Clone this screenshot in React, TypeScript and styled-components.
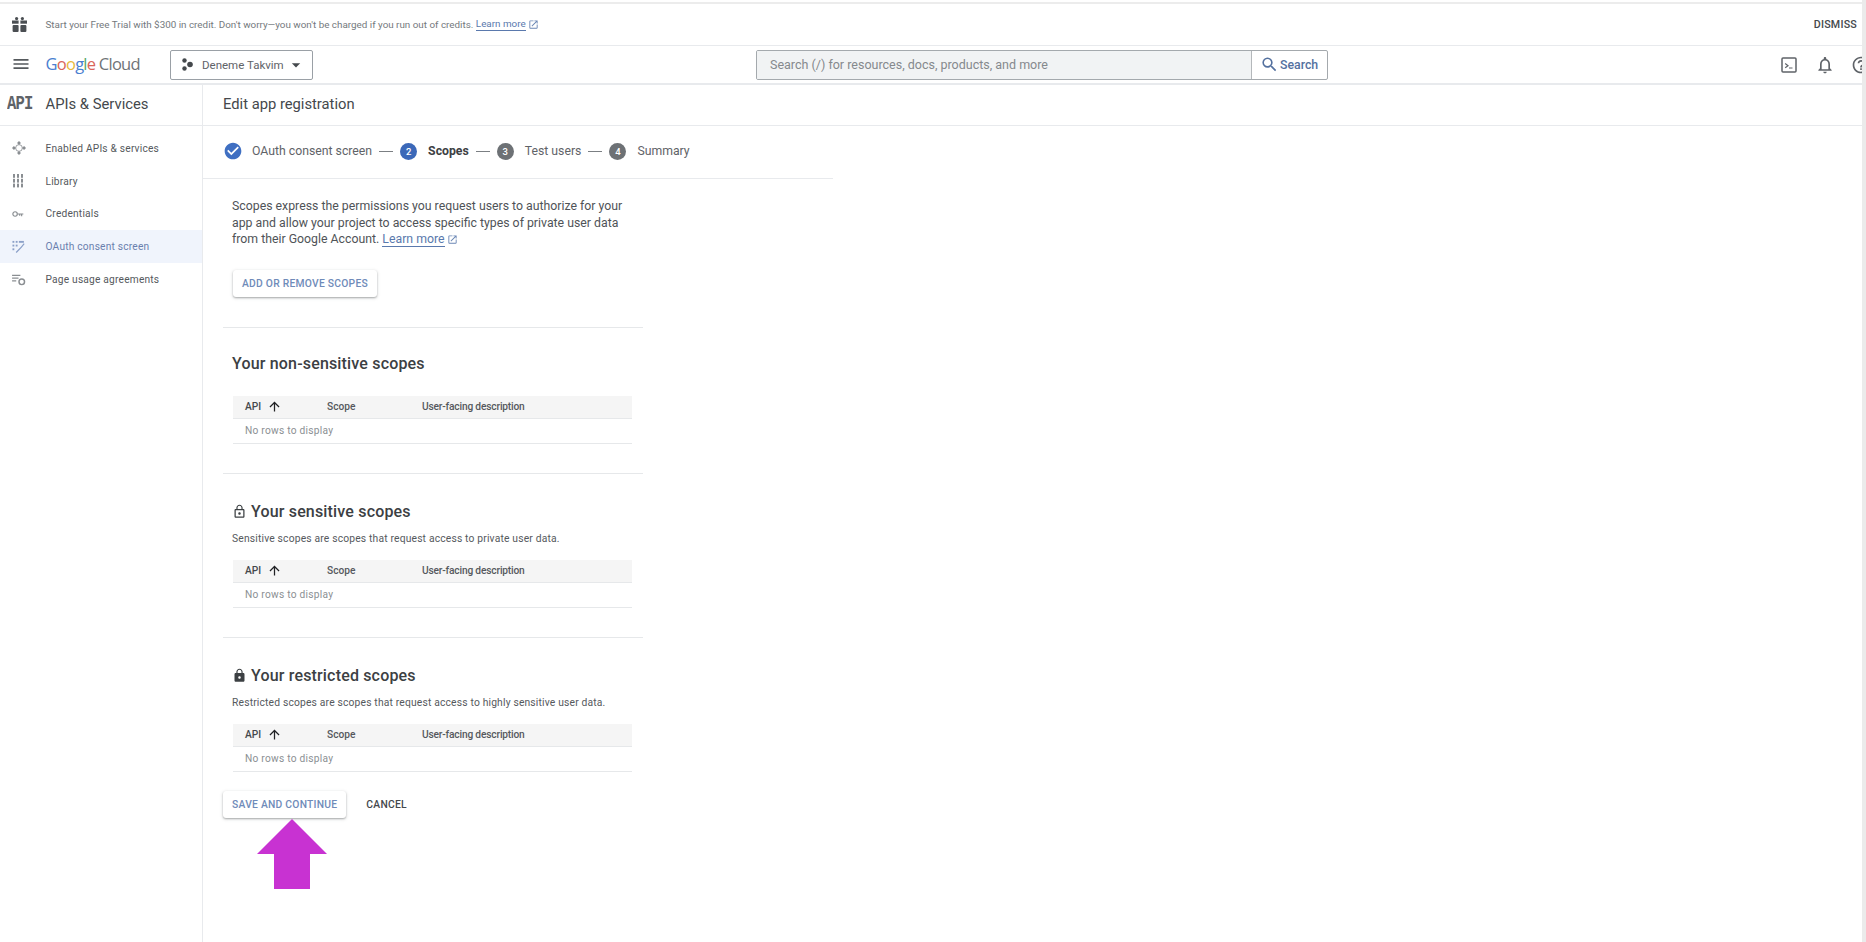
import React from "react";
import styled, { createGlobalStyle } from "styled-components";
import {
  MdMenu,
  MdArrowDropDown,
  MdSearch,
  MdNotificationsNone,
  MdHelpOutline,
  MdLockOutline,
  MdLock,
  MdArrowUpward,
  MdCheckCircle,
  MdOpenInNew,
} from "react-icons/md";

const Global = createGlobalStyle`
  html, body { margin: 0; padding: 0; background: #fff; }
  body { font-family: Roboto, "Liberation Sans", sans-serif; color: #3c4043; }
  * { box-sizing: border-box; }
`;

const Page = styled.div`
  position: relative;
  width: 1866px;
  height: 942px;
  overflow: hidden;
  display: flex;
  background: #fff;
`;
const Viewport = styled.div`
  width: 1862px;
  display: flex;
  flex-direction: column;
  overflow: hidden;
`;
const ScrollStrip = styled.div`
  width: 4px;
  background: #ebebeb;
`;
const TopRule = styled.div`
  height: 4px;
  flex: none;
  padding-top: 2px;
  &::after {
    content: "";
    display: block;
    height: 2px;
    background: #ececec;
  }
`;
const Banner = styled.div`
  height: 42px;
  flex: none;
  display: flex;
  align-items: center;
  border-bottom: 1px solid #e8eaed;
  padding: 0 5px 0 12px;
`;
const GiftSlot = styled.span`
  width: 33.5px;
  display: flex;
  color: #4a4e52;
`;
const BannerText = styled.span`
  font-size: 9.85px;
  color: #74797d;
  flex: 1;
  display: flex;
  align-items: center;
  white-space: pre;
`;
const BannerLink = styled.span`
  color: #5a79ad;
  border-bottom: 1px solid #5a79ad;
  line-height: 12px;
`;
const ExtIcon = styled(MdOpenInNew)`
  color: #6b87b5;
  margin-left: 2px;
  vertical-align: -1.5px;
`;
const Dismiss = styled.span`
  font-size: 10.7px;
  font-weight: 500;
  color: #44484c;
  letter-spacing: 0.2px;
`;
const Header = styled.div`
  height: 39px;
  flex: none;
  display: flex;
  align-items: center;
  border-bottom: 2px solid #e8eaed;
  padding-left: 11px;
`;
const MenuSlot = styled.span`
  width: 34.5px;
  display: flex;
  padding-bottom: 1px;
  color: #55595d;
`;
const Logo = styled.span`
  width: 124.5px;
  padding-bottom: 2px;
  font-family: "Open Sans", sans-serif;
  font-size: 16.5px;
  letter-spacing: -0.75px;
  color: #6f7377;
  white-space: pre;
`;
const Letter = styled.span<{ $c: string }>`
  color: ${(p) => p.$c};
`;
const Project = styled.div`
  width: 143px;
  height: 30px;
  border: 1px solid #9aa0a6;
  border-radius: 2px;
  display: flex;
  align-items: center;
  padding-left: 11px;
  font-size: 11.5px;
  color: #5f6368;
  gap: 9px;
`;
const Caret = styled(MdArrowDropDown)`
  margin-left: -7px;
  color: #45494d;
`;
const SearchBox = styled.div`
  margin-left: 443px;
  width: 572px;
  height: 30px;
  border: 1px solid #a4a9ad;
  border-radius: 2px;
  display: flex;
  overflow: hidden;
`;
const SearchField = styled.div`
  flex: 1;
  background: #f1f3f4;
  color: #85898d;
  font-size: 12.5px;
  display: flex;
  align-items: center;
  padding-left: 13px;
`;
const SearchButton = styled.div`
  width: 76px;
  border-left: 1px solid #b4b8bb;
  display: flex;
  align-items: center;
  padding-left: 8px;
  gap: 1px;
  font-size: 12.3px;
  font-weight: 500;
  color: #54719f;
`;
const HeaderIcons = styled.div`
  margin-left: auto;
  width: 81px;
  display: flex;
  align-items: center;
  color: #5f6368;
  gap: 18px;
  flex: none;
  overflow: hidden;
  height: 20px;
`;
const HelpIcon = styled(MdHelpOutline)`
  margin-left: -2px;
  flex: none;
`;
const BellIcon = styled(MdNotificationsNone)`
  flex: none;
`;
const Body = styled.div`
  flex: 1;
  display: flex;
  min-height: 0;
`;
const Sidebar = styled.aside`
  width: 203px;
  flex: none;
  border-right: 1px solid #e8eaed;
`;
const SideHead = styled.div`
  height: 41px;
  display: flex;
  align-items: center;
  border-bottom: 1px solid #e8eaed;
  padding: 0 0 2px 7px;
  font-size: 14.8px;
  color: #44484c;
`;
const ApiMark = styled.span`
  width: 38.5px;
  display: inline-block;
  font-family: "Liberation Mono", monospace;
  font-weight: 700;
  font-size: 15.5px;
  letter-spacing: -0.8px;
  color: #5f6368;
  transform: scaleY(1.25);
  transform-origin: left center;
`;
const NavList = styled.nav`
  padding-top: 6px;
`;
const NavRow = styled.div<{ $active?: boolean }>`
  height: 32.8px;
  display: flex;
  align-items: center;
  padding-left: 12px;
  font-size: 10.2px;
  letter-spacing: 0.2px;
  color: ${(p) => (p.$active ? "#6a7fae" : "#55595d")};
  background: ${(p) => (p.$active ? "#f0f4fc" : "transparent")};
`;
const NavIcon = styled.span<{ $active?: boolean }>`
  width: 33.5px;
  display: flex;
  color: ${(p) => (p.$active ? "#8ba0c8" : "#8a8e92")};
`;
const Main = styled.main`
  flex: 1;
  min-width: 0;
`;
const TitleBar = styled.div`
  height: 41px;
  display: flex;
  align-items: center;
  border-bottom: 1px solid #e8eaed;
  padding: 0 0 2px 20px;
  font-size: 14.75px;
  color: #44484c;
`;
const Stepper = styled.div`
  width: 630px;
  height: 53px;
  display: flex;
  align-items: center;
  border-bottom: 1px solid #e8eaed;
  padding: 0 0 2px 20px;
  font-size: 12.25px;
  color: #5f6368;
`;
const StepCheck = styled(MdCheckCircle)`
  color: #3f6fc2;
  margin-right: 9px;
`;
const StepBadge = styled.span<{ $active?: boolean }>`
  width: 17px;
  height: 17px;
  border-radius: 50%;
  background: ${(p) => (p.$active ? "#3b68b8" : "#6d7175")};
  color: #fff;
  font-size: 9.5px;
  font-weight: 500;
  display: flex;
  align-items: center;
  justify-content: center;
  margin-right: 11px;
`;
const StepLabel = styled.span<{ $active?: boolean }>`
  font-weight: ${(p) => (p.$active ? 700 : 400)};
  color: ${(p) => (p.$active ? "#3c4043" : "#5f6368")};
`;
const StepDash = styled.span`
  width: 14px;
  margin: 0 7px 0 7px;
  height: 1px;
  background: #7b7f83;
`;
const Form = styled.div`
  width: 420px;
  margin-left: 20px;
`;
const Intro = styled.section`
  padding: 19px 9px 29.5px;
  border-bottom: 1px solid #e6e8ea;
`;
const Paragraph = styled.p`
  margin: 0;
  font-size: 12.3px;
  line-height: 16.5px;
  color: #4f5357;
`;
const InlineLink = styled.span`
  color: #5a79ad;
  border-bottom: 1px solid #5a79ad;
`;
const RaisedButton = styled.button`
  all: unset;
  display: inline-flex;
  align-items: center;
  height: 27px;
  padding: 0 9px;
  border-radius: 3px;
  font-size: 10.3px;
  font-weight: 500;
  letter-spacing: 0.25px;
  color: #6f8bb9;
  white-space: nowrap;
  box-shadow: 0 1px 2px rgba(60, 64, 67, 0.4), 0 1px 4px rgba(60, 64, 67, 0.12);
`;
const AddButton = styled(RaisedButton)`
  margin: 22.5px 0 0 1px;
`;
const ScopeBlock = styled.section<{ $top: number; $divided?: boolean; $bottom: number }>`
  padding: ${(p) => p.$top}px 9px ${(p) => p.$bottom}px;
  border-bottom: ${(p) => (p.$divided ? "1px solid #e6e8ea" : "none")};
`;
const Heading = styled.h3`
  margin: 0;
  height: 24px;
  display: flex;
  align-items: center;
  gap: 4px;
  font-size: 16px;
  font-weight: 500;
  color: #3c4043;
  letter-spacing: 0.17px;
`;
const HeadingLock = styled.span`
  display: flex;
  color: #3c4043;
`;
const Note = styled.p`
  margin: 8px 0 0;
  height: 14px;
  line-height: 14px;
  font-size: 10.3px;
  letter-spacing: 0.17px;
  color: #55595d;
`;
const Table = styled.div<{ $top: number }>`
  width: 399px;
  margin: ${(p) => p.$top}px 0 0 1px;
  border-bottom: 1px solid #e6e8ea;
`;
const TableHead = styled.div`
  height: 23.5px;
  background: #f5f5f5;
  border-bottom: 1px solid #e6e8ea;
  display: grid;
  grid-template-columns: 82px 95px 1fr;
  align-items: center;
  padding-left: 12px;
  font-size: 10.2px;
  font-weight: 500;
  color: #55595d;
`;
const ApiColumn = styled.span`
  display: flex;
  align-items: center;
  gap: 6px;
  color: #44484c;
`;
const DescColumn = styled.span`
  letter-spacing: -0.17px;
`;
const SortArrow = styled(MdArrowUpward)`
  color: #202124;
`;
const TableEmpty = styled.div`
  height: 23.5px;
  display: flex;
  align-items: center;
  padding-left: 12px;
  font-size: 10.2px;
  letter-spacing: 0.25px;
  color: #8b8f93;
`;
const Actions = styled.div`
  display: flex;
  align-items: center;
  gap: 20px;
  margin-top: 19px;
`;
const CancelButton = styled.span`
  font-size: 10.3px;
  font-weight: 500;
  letter-spacing: 0.25px;
  color: #44484c;
`;
const Pointer = styled.svg`
  position: absolute;
  left: 257px;
  top: 819px;
  width: 70px;
  height: 70px;
`;
const TerminalSvg = styled.svg`
  flex: none;
`;

const GiftIcon = () => (
  <svg width="15" height="15" viewBox="0 0 15 15" fill="currentColor">
    <rect x="0" y="3.5" width="6.6" height="3.2" />
    <rect x="8.4" y="3.5" width="6.6" height="3.2" />
    <rect x="0.6" y="8" width="6" height="7" rx="1" />
    <rect x="8.4" y="8" width="6" height="7" rx="1" />
    <circle cx="4.6" cy="1.6" r="1.6" />
    <circle cx="10.4" cy="1.6" r="1.6" />
  </svg>
);
const HubIcon = () => (
  <svg width="11" height="13" viewBox="0 0 11 13" fill="#44484c">
    <circle cx="2.5" cy="2.5" r="2.2" />
    <circle cx="8" cy="6.5" r="2.8" />
    <circle cx="2.5" cy="10.5" r="2.2" />
  </svg>
);
const TerminalIcon = () => (
  <TerminalSvg width="16" height="16" viewBox="0 0 16 16" fill="none" stroke="currentColor">
    <rect x="1" y="1" width="14" height="14" rx="1" strokeWidth="1.5" />
    <path d="M4.2 6.5 7 8.7 4.2 10.8M8 11h3.5" strokeWidth="1.2" />
  </TerminalSvg>
);
const ApisIcon = () => (
  <svg width="14" height="14" viewBox="0 0 15 15" fill="currentColor">
    <path d="M7.5 0 9.6 2.1 7.5 4.2 5.4 2.1ZM2.1 5.4 4.2 7.5 2.1 9.6 0 7.5ZM12.9 5.4 15 7.5 12.9 9.6 10.8 7.5ZM7.5 10.8 9.6 12.9 7.5 15 5.4 12.9Z" />
    <circle cx="7.5" cy="7.5" r="3.6" fill="none" stroke="currentColor" strokeWidth="0.9" />
  </svg>
);
const LibraryIcon = () => (
  <svg width="13" height="14" viewBox="0 0 13 14" fill="currentColor">
    {[1, 5, 9].map((x) =>
      [0, 4.8, 9.6].map((y) => <rect key={`${x}-${y}`} x={x} y={y} width="2" height="3.8" />)
    )}
  </svg>
);
const KeyIcon = () => (
  <svg width="12" height="8" viewBox="0 0 13 9" fill="none" stroke="currentColor" strokeWidth="1.3">
    <circle cx="3.2" cy="4.5" r="2.5" />
    <path d="M5.8 4.5H12.5M10.6 4.5V7M8.4 4.5V6.4" />
  </svg>
);
const ConsentIcon = () => (
  <svg width="13" height="13" viewBox="0 0 14 14" fill="currentColor">
    <rect x="0.5" y="1" width="2" height="2" />
    <rect x="0.5" y="5" width="2" height="2" />
    <rect x="0.5" y="9" width="2" height="2" />
    <rect x="4" y="1" width="2" height="2" />
    <rect x="4" y="5" width="2" height="2" />
    <rect x="7.4" y="1" width="5.4" height="2" />
    <path d="M4 13 9.6 7.2 12.6 3.6l1 .8-3 3.8L5 14Z" />
  </svg>
);
const UsageIcon = () => (
  <svg width="14" height="12" viewBox="0 0 15 13" fill="none" stroke="currentColor">
    <path d="M0 1.5h9M0 4.5h7M0 7.5h4.5" strokeWidth="1.2" />
    <circle cx="10.5" cy="8.5" r="3" strokeWidth="1.6" />
  </svg>
);

const navItems = [
  { label: "Enabled APIs & services", icon: <ApisIcon /> },
  { label: "Library", icon: <LibraryIcon /> },
  { label: "Credentials", icon: <KeyIcon /> },
  { label: "OAuth consent screen", icon: <ConsentIcon />, active: true },
  { label: "Page usage agreements", icon: <UsageIcon /> },
];

const ScopesTable = ({ top }: { top: number }) => (
  <Table $top={top}>
    <TableHead>
      <ApiColumn>
        API <SortArrow size={15} />
      </ApiColumn>
      <span>Scope</span>
      <DescColumn>User-facing description</DescColumn>
    </TableHead>
    <TableEmpty>No rows to display</TableEmpty>
  </Table>
);

export default function App() {
  return (
    <Page>
      <Global />
      <Viewport>
        <TopRule />
        <Banner>
          <GiftSlot>
            <GiftIcon />
          </GiftSlot>
          <BannerText>
            Start your Free Trial with $300 in credit. Don't worry—you won't be charged if you run out of credits.{" "}
            <BannerLink>Learn more</BannerLink>
            <ExtIcon size={11} />
          </BannerText>
          <Dismiss>DISMISS</Dismiss>
        </Banner>
        <Header>
          <MenuSlot>
            <MdMenu size={20} />
          </MenuSlot>
          <Logo>
            <Letter $c="#4a7fd0">G</Letter>
            <Letter $c="#d9655a">o</Letter>
            <Letter $c="#e8b93c">o</Letter>
            <Letter $c="#4a7fd0">g</Letter>
            <Letter $c="#55a868">l</Letter>
            <Letter $c="#d9655a">e</Letter> Cloud
          </Logo>
          <Project>
            <HubIcon />
            Deneme Takvim
            <Caret size={20} />
          </Project>
          <SearchBox>
            <SearchField>Search (/) for resources, docs, products, and more</SearchField>
            <SearchButton>
              <MdSearch size={19} />
              Search
            </SearchButton>
          </SearchBox>
          <HeaderIcons>
            <TerminalIcon />
            <BellIcon size={20} />
            <HelpIcon size={20} />
          </HeaderIcons>
        </Header>
        <Body>
          <Sidebar>
            <SideHead>
              <ApiMark>API</ApiMark>
              APIs &amp; Services
            </SideHead>
            <NavList>
              {navItems.map((item) => (
                <NavRow key={item.label} $active={item.active}>
                  <NavIcon $active={item.active}>{item.icon}</NavIcon>
                  {item.label}
                </NavRow>
              ))}
            </NavList>
          </Sidebar>
          <Main>
            <TitleBar>Edit app registration</TitleBar>
            <Stepper>
              <StepCheck size={20} />
              <StepLabel>OAuth consent screen</StepLabel>
              <StepDash />
              <StepBadge $active>2</StepBadge>
              <StepLabel $active>Scopes</StepLabel>
              <StepDash />
              <StepBadge>3</StepBadge>
              <StepLabel>Test users</StepLabel>
              <StepDash />
              <StepBadge>4</StepBadge>
              <StepLabel>Summary</StepLabel>
            </Stepper>
            <Form>
              <Intro>
                <Paragraph>
                  Scopes express the permissions you request users to authorize for your
                  <br />
                  app and allow your project to access specific types of private user data
                  <br />
                  from their Google Account. <InlineLink>Learn more</InlineLink>
                  <ExtIcon size={11} />
                </Paragraph>
                <AddButton>ADD OR REMOVE SCOPES</AddButton>
              </Intro>
              <ScopeBlock $top={24} $bottom={29} $divided>
                <Heading>Your non-sensitive scopes</Heading>
                <ScopesTable top={20} />
              </ScopeBlock>
              <ScopeBlock $top={26} $bottom={29} $divided>
                <Heading>
                  <HeadingLock>
                    <MdLockOutline size={15} />
                  </HeadingLock>
                  Your sensitive scopes
                </Heading>
                <Note>Sensitive scopes are scopes that request access to private user data.</Note>
                <ScopesTable top={14} />
              </ScopeBlock>
              <ScopeBlock $top={26} $bottom={0}>
                <Heading>
                  <HeadingLock>
                    <MdLock size={15} />
                  </HeadingLock>
                  Your restricted scopes
                </Heading>
                <Note>Restricted scopes are scopes that request access to highly sensitive user data.</Note>
                <ScopesTable top={14} />
              </ScopeBlock>
              <Actions>
                <RaisedButton>SAVE AND CONTINUE</RaisedButton>
                <CancelButton>CANCEL</CancelButton>
              </Actions>
            </Form>
          </Main>
        </Body>
      </Viewport>
      <ScrollStrip />
      <Pointer viewBox="0 0 70 70">
        <path d="M35 0 70 35H53V70H17V35H0Z" fill="#c832d2" />
      </Pointer>
    </Page>
  );
}
